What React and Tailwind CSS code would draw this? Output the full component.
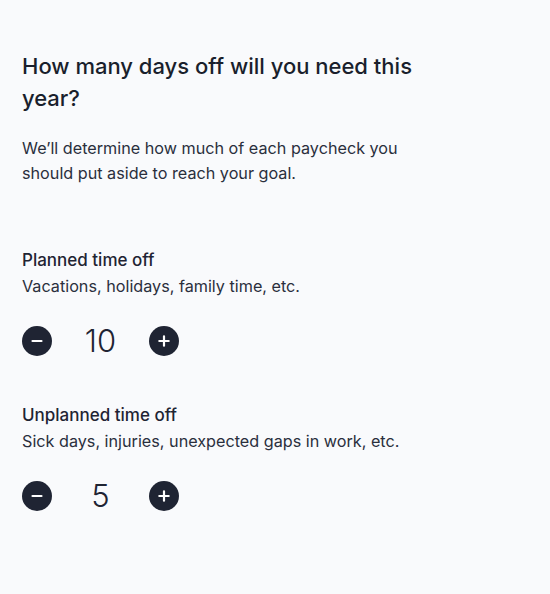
import React, { useState } from 'react'

const font = { fontFamily: 'Inter, "Open Sans", sans-serif' }

const MinusIcon = () => (
    <svg width="14" height="14" viewBox="0 0 14 14" fill="none">
        <path d="M2.5 7h9" stroke="white" strokeWidth="2.2" strokeLinecap="round" />
    </svg>
)

const PlusIcon = () => (
    <svg width="14" height="14" viewBox="0 0 14 14" fill="none">
        <path d="M2.3 7h9.4M7 2.3v9.4" stroke="white" strokeWidth="2.2" strokeLinecap="round" />
    </svg>
)

const Stepper = ({ value, onChange }) => (
    <div className="flex items-center">
        <button
            onClick={() => onChange(Math.max(0, value - 1))}
            className="w-[30px] h-[30px] rounded-full bg-[#1f2433] flex items-center justify-center"
        >
            <MinusIcon />
        </button>
        <span className="w-[97px] text-center text-[31px] leading-[36px] font-light text-[#1f2433]">{value}</span>
        <button
            onClick={() => onChange(value + 1)}
            className="w-[30px] h-[30px] rounded-full bg-[#1f2433] flex items-center justify-center"
        >
            <PlusIcon />
        </button>
    </div>
)

const Section = ({ title, subtitle, value, onChange }) => (
    <div>
        <h3 className="text-[17px] leading-[24px] font-medium text-[#1f2433]">{title}</h3>
        <p className="mt-[2px] text-[16.2px] leading-[24px] text-[#2a2f3d]">{subtitle}</p>
        <div className="mt-[25px]">
            <Stepper value={value} onChange={onChange} />
        </div>
    </div>
)

export default function App() {
    const [planned, setPlanned] = useState(10)
    const [unplanned, setUnplanned] = useState(5)

    return (
        <div className="min-h-[594px] w-full bg-[#f9fafc] px-[22px] pt-[50px]" style={font}>
            <h1 className="max-w-[400px] text-[22px] leading-[32px] font-medium text-[#1a1f2c]">
                How many days off will you need this year?
            </h1>
            <p className="mt-[22px] max-w-[400px] text-[16.2px] leading-[25px] text-[#2a2f3d]">
                We’ll determine how much of each paycheck you should put aside to reach your goal.
            </p>

            <div className="mt-[62px] flex flex-col gap-[44px]">
                <Section
                    title="Planned time off"
                    subtitle="Vacations, holidays, family time, etc."
                    value={planned}
                    onChange={setPlanned}
                />
                <Section
                    title="Unplanned time off"
                    subtitle="Sick days, injuries, unexpected gaps in work, etc."
                    value={unplanned}
                    onChange={setUnplanned}
                />
            </div>
        </div>
    )
}
